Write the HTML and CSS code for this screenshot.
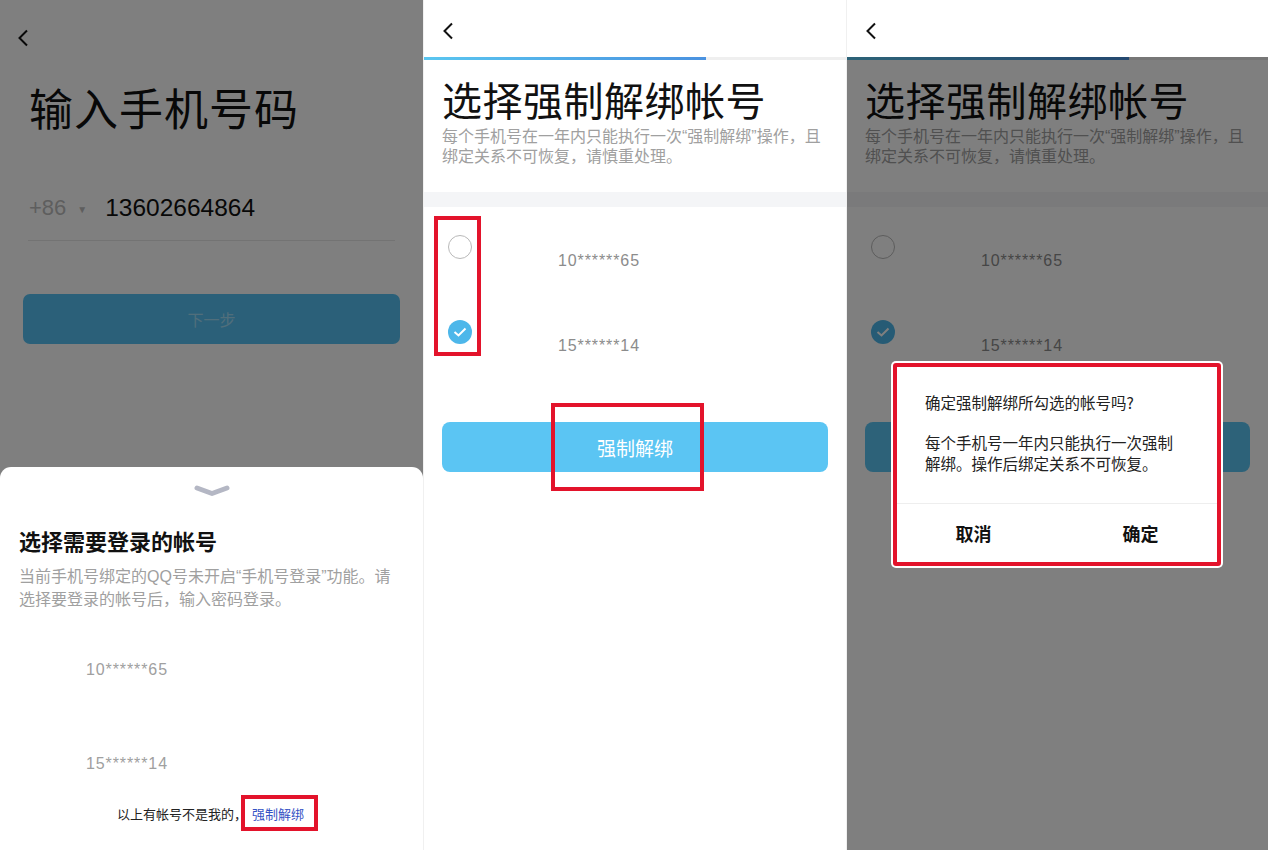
FILE: index.html
```html
<!DOCTYPE html>
<html lang="zh-CN">

<head>
    <meta charset="UTF-8">
    <meta name="viewport" content="width=device-width, initial-scale=1.0">
    <title>强制解绑</title>
    <link rel="stylesheet" href="styles.css">
</head>

<body>
    <div class="screens">
        <!-- 第一屏：输入手机号 + 选择帐号弹层 -->
        <section class="screen">
            <div class="nav nav-first">
                <svg class="back" width="12" height="18" viewBox="0 0 12 18"><polyline points="10,1.5 2.5,9 10,16.5" fill="none" stroke="#111" stroke-width="2"/></svg>
            </div>
            <div class="login">
                <h1 class="big-title">输入手机号码</h1>
                <div class="phone-row">
                    <span class="area">+86</span>
                    <span class="caret">▼</span>
                    <span class="phone">13602664864</span>
                </div>
                <div class="btn btn-next">下一步</div>
            </div>
            <div class="mask"></div>
            <div class="sheet">
                <div class="handle">
                    <svg width="36" height="12" viewBox="0 0 36 12"><path d="M3 3 L18 8.5 L33 3" fill="none" stroke="#b4b7c4" stroke-width="5" stroke-linecap="round" stroke-linejoin="round"/></svg>
                </div>
                <h2 class="sheet-title">选择需要登录的帐号</h2>
                <p class="sheet-desc">当前手机号绑定的QQ号未开启“手机号登录”功能。请选择要登录的帐号后，输入密码登录。</p>
                <div class="sheet-acc">10******65</div>
                <div class="sheet-acc second">15******14</div>
                <div class="sheet-foot">
                    <span>以上有帐号不是我的，</span>
                    <span class="unbind-link">强制解绑</span>
                </div>
            </div>
        </section>

        <!-- 第二屏：选择强制解绑帐号 -->
        <section class="screen">
            <div class="nav">
                <svg class="back" width="12" height="18" viewBox="0 0 12 18"><polyline points="10,1.5 2.5,9 10,16.5" fill="none" stroke="#111" stroke-width="2"/></svg>
            </div>
            <div class="progress"><div class="progress-bar"></div></div>
            <div class="unbind">
                <h1 class="mid-title">选择强制解绑帐号</h1>
                <p class="tip">每个手机号在一年内只能执行一次“强制解绑”操作，且绑定关系不可恢复，请慎重处理。</p>
            </div>
            <div class="band"></div>
            <div class="accounts">
                <div class="radios marked">
                    <span class="radio"></span>
                    <span class="radio checked">
                        <svg width="14" height="10" viewBox="0 0 14 10"><polyline points="1.5,5 5.5,8.5 12.5,1.5" fill="none" stroke="#fff" stroke-width="2"/></svg>
                    </span>
                </div>
                <div class="acc-list">
                    <div class="acc">10******65</div>
                    <div class="acc">15******14</div>
                </div>
            </div>
            <div class="btn btn-unbind">
                强制解绑
                <span class="mark-box"></span>
            </div>
        </section>

        <!-- 第三屏：确认弹窗 -->
        <section class="screen">
            <div class="nav">
                <svg class="back" width="12" height="18" viewBox="0 0 12 18"><polyline points="10,1.5 2.5,9 10,16.5" fill="none" stroke="#111" stroke-width="2"/></svg>
            </div>
            <div class="progress"><div class="progress-bar"></div></div>
            <div class="unbind">
                <h1 class="mid-title">选择强制解绑帐号</h1>
                <p class="tip">每个手机号在一年内只能执行一次“强制解绑”操作，且绑定关系不可恢复，请慎重处理。</p>
            </div>
            <div class="band"></div>
            <div class="accounts">
                <div class="radios">
                    <span class="radio"></span>
                    <span class="radio checked">
                        <svg width="14" height="10" viewBox="0 0 14 10"><polyline points="1.5,5 5.5,8.5 12.5,1.5" fill="none" stroke="#fff" stroke-width="2"/></svg>
                    </span>
                </div>
                <div class="acc-list">
                    <div class="acc">10******65</div>
                    <div class="acc">15******14</div>
                </div>
            </div>
            <!-- 按钮文字被弹窗遮住 -->
            <div class="btn btn-unbind"></div>
            <div class="mask mask-low"></div>
            <div class="dialog">
                <div class="dialog-body">
                    <p class="dialog-title">确定强制解绑所勾选的帐号吗?</p>
                    <p class="dialog-text">每个手机号一年内只能执行一次强制解绑。操作后绑定关系不可恢复。</p>
                </div>
                <div class="dialog-btns">
                    <span class="cancel">取消</span>
                    <span class="ok">确定</span>
                </div>
            </div>
        </section>
    </div>
</body>

</html>
```

FILE: styles.css
```css
body {
    margin: 0;
    padding: 0;
    font-family: "Liberation Sans", "Noto Sans CJK SC", sans-serif;
    color: #111;
    background: #fff;
}
p, h1, h2 {
    margin: 0;
}
.screens {
    display: flex;
    width: 1268px;
    height: 850px;
    overflow: hidden;
}
.screen {
    position: relative;
    width: 423px;
    height: 850px;
    flex: none;
    background: #fff;
    overflow: hidden;
}
.screen + .screen {
    border-left: 1px solid #f0f0f0;
    width: 422px;
}
.screen:last-child {
    width: 421px;
}

/* 顶部导航 */
.nav {
    height: 57px;
    padding: 22px 0 0 18px;
    box-sizing: border-box;
}
.nav-first {
    height: 79px;
    padding: 29px 0 0 17px;
}
.back {
    display: block;
}

/* 第一屏 登录页 */
.login {
    padding: 0 23px;
}
.big-title {
    font-family: "Noto Sans CJK SC", sans-serif;
    font-weight: 400;
    font-size: 44px;
    line-height: 56px;
    letter-spacing: 1px;
    padding-left: 6px;
}
.phone-row {
    margin: 58px 5px 0 5px;
    padding: 0 0 17px 1px;
    height: 48px;
    box-sizing: border-box;
    display: flex;
    align-items: center;
    border-bottom: 1px solid #e6e6e6;
}
.area {
    font-size: 22px;
    color: #bdbdbd;
}
.caret {
    font-size: 10px;
    color: #bdbdbd;
    margin: 2px 18px 0 11px;
}
.phone {
    font-size: 24.5px;
    color: #111;
}
.btn {
    height: 50px;
    border-radius: 7px;
    background: #57c1f2;
    display: flex;
    align-items: center;
    justify-content: center;
}
.btn-next {
    margin-top: 53px;
    font-family: "Noto Sans CJK SC", sans-serif;
    font-size: 16px;
    color: rgba(255, 255, 255, 0.45);
}

.mask {
    position: absolute;
    left: 0;
    right: 0;
    top: 0;
    bottom: 0;
    background: rgba(0, 0, 0, 0.5);
}
.mask-low {
    top: 57px;
}

/* 底部弹层 */
.sheet {
    position: absolute;
    left: 0;
    right: 0;
    top: 467px;
    bottom: 0;
    background: #fff;
    border-radius: 11px 11px 0 0;
}
.handle {
    padding-top: 18px;
    display: flex;
    justify-content: center;
}
.handle svg {
    display: block;
}
.sheet-title {
    margin: 28px 0 0 19px;
    font-family: "Noto Sans CJK SC", sans-serif;
    font-size: 22px;
    font-weight: 700;
    line-height: 30px;
}
.sheet-desc {
    margin: 10px 30px 0 19px;
    font-size: 16px;
    line-height: 23px;
    color: #a0a0a0;
}
.sheet-acc {
    margin: 49px 0 0 86px;
    font-size: 16px;
    line-height: 20px;
    letter-spacing: 0.9px;
    color: #a0a0a0;
}
.sheet-acc.second {
    margin-top: 74px;
}
.sheet-foot {
    margin-top: 21px;
    padding-left: 117px;
    display: flex;
    align-items: center;
    font-family: "Noto Sans CJK SC", sans-serif;
    font-size: 13px;
    color: #222;
}
.unbind-link {
    height: 36px;
    box-sizing: border-box;
    display: flex;
    align-items: center;
    margin-left: -6px;
    padding: 0 10px 0 7px;
    border: 4px solid #e3132b;
    color: #3552c4;
}

/* 第二、三屏 */
.progress {
    height: 3px;
    background: #efefef;
}
.progress-bar {
    width: 282px;
    height: 3px;
    background: linear-gradient(to right, #5ac6f0, #4a92e0);
}
.unbind {
    padding: 15px 18px 0 18px;
}
.mid-title {
    font-family: "Noto Sans CJK SC", sans-serif;
    font-weight: 400;
    font-size: 40px;
    line-height: 48px;
    letter-spacing: 0.5px;
}
.tip {
    margin-top: 4px;
    font-size: 16px;
    line-height: 20px;
    color: #a0a0a0;
}
.band {
    margin-top: 25px;
    height: 15px;
    background: #f4f5f7;
}
.accounts {
    margin: 9px 0 0 10px;
    display: flex;
}
.radios {
    width: 47px;
    height: 140px;
    box-sizing: border-box;
    border: 4px solid transparent;
    padding: 15px 0 0 10px;
    display: flex;
    flex-direction: column;
    gap: 61px;
}
.radios.marked {
    border-color: #e3132b;
}
.radio {
    width: 24px;
    height: 24px;
    box-sizing: border-box;
    border: 1px solid #b9b9b9;
    border-radius: 50%;
    display: flex;
    align-items: center;
    justify-content: center;
}
.radio.checked {
    border: none;
    background: #4db7ea;
}
.acc-list {
    margin-left: 77px;
    padding-top: 35px;
    display: flex;
    flex-direction: column;
    gap: 65px;
}
.acc {
    font-size: 16px;
    line-height: 20px;
    letter-spacing: 0.9px;
    color: #8c8c8c;
}
.btn-unbind {
    position: relative;
    margin: 66px 18px 0 18px;
    height: 50px;
    border-radius: 8px;
    background: #5bc5f3;
    font-family: "Noto Sans CJK SC", sans-serif;
    font-size: 19px;
    color: #fff;
}
.mark-box {
    position: absolute;
    left: 109px;
    top: -19px;
    width: 153px;
    height: 88px;
    box-sizing: border-box;
    border: 4px solid #e3132b;
}

/* 确认弹窗 */
.dialog {
    position: absolute;
    left: 46px;
    top: 363px;
    width: 328px;
    box-sizing: border-box;
    background: #fff;
    border: 4px solid #e3132b;
    border-radius: 3px;
    box-shadow: 0 0 0 2px #fff;
    font-family: "Noto Sans CJK SC", sans-serif;
}
.dialog-body {
    padding: 24px 40px 29px 28px;
    border-bottom: 1px solid #eeeeee;
}
.dialog-title {
    font-size: 15.5px;
    line-height: 22px;
    color: #222;
}
.dialog-text {
    margin-top: 19px;
    font-size: 15.5px;
    line-height: 21px;
    color: #222;
}
.dialog-btns {
    height: 58px;
    display: flex;
}
.dialog-btns span {
    flex: 1;
    display: flex;
    align-items: center;
    justify-content: center;
    font-size: 18px;
    font-weight: 700;
    color: #111;
}
.dialog-btns .cancel {
    padding-right: 8px;
}
.dialog-btns .ok {
    padding-left: 6px;
}
```
